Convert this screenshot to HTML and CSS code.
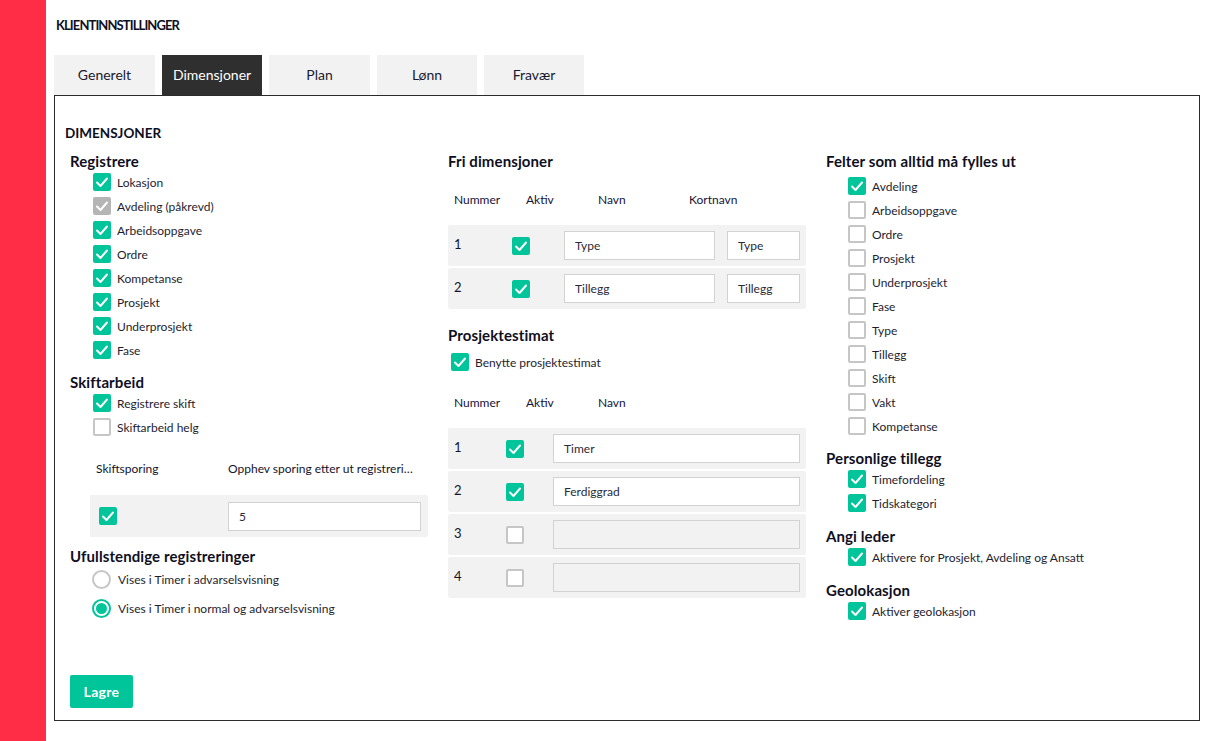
FILE: index.html
```html
<!DOCTYPE html>
<html lang="no">
<head>
<meta charset="utf-8">
<title>Klientinnstillinger</title>
<link rel="stylesheet" href="styles.css">
</head>
<body>
<div class="app">
  <aside class="sidebar"></aside>
  <main class="main">
    <h1 class="title">KLIENTINNSTILLINGER</h1>
    <nav class="tabs">
      <div class="tab w101">Generelt</div>
      <div class="tab active">Dimensjoner</div>
      <div class="tab w101">Plan</div>
      <div class="tab">Lønn</div>
      <div class="tab">Fravær</div>
    </nav>
    <section class="panel">
      <h2 class="panel-title">DIMENSJONER</h2>
      <div class="cols">
        <div class="col col-left">
          <h3 class="sec">Registrere</h3>
          <div class="list">
            <label class="item"><span class="cb on"><svg viewBox="0 0 18 18"><polyline points="4,9.5 7.5,13 14,5.5"/></svg></span>Lokasjon</label>
            <label class="item"><span class="cb dis"><svg viewBox="0 0 18 18"><polyline points="4,9.5 7.5,13 14,5.5"/></svg></span>Avdeling (påkrevd)</label>
            <label class="item"><span class="cb on"><svg viewBox="0 0 18 18"><polyline points="4,9.5 7.5,13 14,5.5"/></svg></span>Arbeidsoppgave</label>
            <label class="item"><span class="cb on"><svg viewBox="0 0 18 18"><polyline points="4,9.5 7.5,13 14,5.5"/></svg></span>Ordre</label>
            <label class="item"><span class="cb on"><svg viewBox="0 0 18 18"><polyline points="4,9.5 7.5,13 14,5.5"/></svg></span>Kompetanse</label>
            <label class="item"><span class="cb on"><svg viewBox="0 0 18 18"><polyline points="4,9.5 7.5,13 14,5.5"/></svg></span>Prosjekt</label>
            <label class="item"><span class="cb on"><svg viewBox="0 0 18 18"><polyline points="4,9.5 7.5,13 14,5.5"/></svg></span>Underprosjekt</label>
            <label class="item"><span class="cb on"><svg viewBox="0 0 18 18"><polyline points="4,9.5 7.5,13 14,5.5"/></svg></span>Fase</label>
          </div>
          <h3 class="sec sec-gap">Skiftarbeid</h3>
          <div class="list">
            <label class="item"><span class="cb on"><svg viewBox="0 0 18 18"><polyline points="4,9.5 7.5,13 14,5.5"/></svg></span>Registrere skift</label>
            <label class="item"><span class="cb"></span>Skiftarbeid helg</label>
          </div>
          <div class="skift-head">
            <span class="sh-a">Skiftsporing</span>
            <span class="sh-b">Opphev sporing etter ut registreri…</span>
          </div>
          <div class="skift-row">
            <span class="cb on"><svg viewBox="0 0 18 18"><polyline points="4,9.5 7.5,13 14,5.5"/></svg></span>
            <div class="input skift-input">5</div>
          </div>
          <h3 class="sec sec-gap2">Ufullstendige registreringer</h3>
          <div class="radios">
            <label class="radio-item"><span class="radio"></span>Vises i Timer i advarselsvisning</label>
            <label class="radio-item"><span class="radio sel"></span>Vises i Timer i normal og advarselsvisning</label>
          </div>
        </div>

        <div class="col col-mid">
          <h3 class="sec">Fri dimensjoner</h3>
          <div class="thead">
            <span class="th th-num">Nummer</span>
            <span class="th th-akt">Aktiv</span>
            <span class="th th-navn">Navn</span>
            <span class="th">Kortnavn</span>
          </div>
          <div class="rows">
            <div class="trow fri">
              <span class="num">1</span>
              <span class="cb on"><svg viewBox="0 0 18 18"><polyline points="4,9.5 7.5,13 14,5.5"/></svg></span>
              <div class="input">Type</div>
              <div class="input">Type</div>
            </div>
            <div class="trow fri">
              <span class="num">2</span>
              <span class="cb on"><svg viewBox="0 0 18 18"><polyline points="4,9.5 7.5,13 14,5.5"/></svg></span>
              <div class="input">Tillegg</div>
              <div class="input">Tillegg</div>
            </div>
          </div>
          <h3 class="sec sec-est">Prosjektestimat</h3>
          <label class="item item-est"><span class="cb on"><svg viewBox="0 0 18 18"><polyline points="4,9.5 7.5,13 14,5.5"/></svg></span>Benytte prosjektestimat</label>
          <div class="thead thead-est">
            <span class="th th-num">Nummer</span>
            <span class="th th-akt">Aktiv</span>
            <span class="th">Navn</span>
          </div>
          <div class="rows">
            <div class="trow est">
              <span class="num">1</span>
              <span class="cb on"><svg viewBox="0 0 18 18"><polyline points="4,9.5 7.5,13 14,5.5"/></svg></span>
              <div class="input">Timer</div>
            </div>
            <div class="trow est">
              <span class="num">2</span>
              <span class="cb on"><svg viewBox="0 0 18 18"><polyline points="4,9.5 7.5,13 14,5.5"/></svg></span>
              <div class="input">Ferdiggrad</div>
            </div>
            <div class="trow est">
              <span class="num">3</span>
              <span class="cb"></span>
              <div class="input empty"></div>
            </div>
            <div class="trow est">
              <span class="num">4</span>
              <span class="cb"></span>
              <div class="input empty"></div>
            </div>
          </div>
        </div>

        <div class="col col-right">
          <h3 class="sec">Felter som alltid må fylles ut</h3>
          <div class="list list-felt">
            <label class="item"><span class="cb on"><svg viewBox="0 0 18 18"><polyline points="4,9.5 7.5,13 14,5.5"/></svg></span>Avdeling</label>
            <label class="item"><span class="cb"></span>Arbeidsoppgave</label>
            <label class="item"><span class="cb"></span>Ordre</label>
            <label class="item"><span class="cb"></span>Prosjekt</label>
            <label class="item"><span class="cb"></span>Underprosjekt</label>
            <label class="item"><span class="cb"></span>Fase</label>
            <label class="item"><span class="cb"></span>Type</label>
            <label class="item"><span class="cb"></span>Tillegg</label>
            <label class="item"><span class="cb"></span>Skift</label>
            <label class="item"><span class="cb"></span>Vakt</label>
            <label class="item"><span class="cb"></span>Kompetanse</label>
          </div>
          <h3 class="sec sec-r first">Personlige tillegg</h3>
          <div class="list">
            <label class="item"><span class="cb on"><svg viewBox="0 0 18 18"><polyline points="4,9.5 7.5,13 14,5.5"/></svg></span>Timefordeling</label>
            <label class="item"><span class="cb on"><svg viewBox="0 0 18 18"><polyline points="4,9.5 7.5,13 14,5.5"/></svg></span>Tidskategori</label>
          </div>
          <h3 class="sec sec-r">Angi leder</h3>
          <div class="list">
            <label class="item"><span class="cb on"><svg viewBox="0 0 18 18"><polyline points="4,9.5 7.5,13 14,5.5"/></svg></span>Aktivere for Prosjekt, Avdeling og Ansatt</label>
          </div>
          <h3 class="sec sec-r">Geolokasjon</h3>
          <div class="list">
            <label class="item"><span class="cb on"><svg viewBox="0 0 18 18"><polyline points="4,9.5 7.5,13 14,5.5"/></svg></span>Aktiver geolokasjon</label>
          </div>
        </div>
      </div>
      <button class="save">Lagre</button>
    </section>
  </main>
</div>
</body>
</html>
```

FILE: styles.css
```css
* { box-sizing: border-box; }
html, body { margin: 0; padding: 0; background: #fff; }
body {
  font-family: Lato, "Noto Sans", "Liberation Sans", sans-serif;
  color: #14142b;
  font-size: 12px;
}
.app { display: flex; min-height: 741px; }
.sidebar { width: 46px; flex: none; background: #ff2d46; }
.main { flex: 1; padding-left: 8px; }

.title {
  margin: 16px 0 0 2px;
  font-size: 13px;
  line-height: 18px;
  font-weight: 700;
  letter-spacing: -0.9px;
  color: #0f0f22;
}
.tabs { display: flex; gap: 7px; margin-top: 21px; }
.tab {
  width: 100px; height: 40px;
  background: #f2f2f2;
  display: flex; align-items: center; justify-content: center;
  font-size: 14px;
  color: #1a1a2e;
  padding-bottom: 1px;
}
.tab.w101 { width: 101px; }
.tab.active { background: #2f2f2f; color: #fff; }

.panel {
  width: 1146px;
  border: 1px solid #2b2b2b;
  padding: 28px 10px 12px;
}
.panel-title { margin: 0; font-size: 13.5px; line-height: 18px; font-weight: 700; color: #0f0f22; }
.cols {
  display: grid;
  grid-template-columns: 378px 378px 1fr;
  margin: 10px 0 0 5px;
}
.col { display: flex; flex-direction: column; }
.sec { margin: 0; font-size: 15px; line-height: 18px; font-weight: 700; color: #0f0f22; letter-spacing: 0.1px; }

.list { display: flex; flex-direction: column; }
.item {
  display: flex; align-items: center;
  height: 24px;
  padding-left: 23px;
  gap: 6px;
  font-size: 12px;
  color: #1e1e30;
}
.col-right .item { padding-left: 22px; }

.cb {
  width: 18px; height: 18px; flex: none;
  border: 2px solid #c6c6c6;
  border-radius: 2px;
  background: #fff;
  display: inline-flex; align-items: center; justify-content: center;
}
.cb.on { background: #00c49a; border-color: #00c49a; }
.cb.dis { background: #b5b5b5; border-color: #b5b5b5; }
.cb svg { width: 18px; height: 18px; flex: none; margin: -2px; }
.cb svg polyline { fill: none; stroke: #fff; stroke-width: 2; stroke-linecap: round; stroke-linejoin: round; }

.sec-gap { margin-top: 11px; }
.skift-head {
  display: flex; margin-top: 21px; padding-left: 26px;
  line-height: 18px; font-size: 12px;
}
.sh-a { width: 132px; flex: none; }
.sh-b { white-space: nowrap; }
.skift-row {
  margin: 17px 0 0 20px;
  width: 338px; height: 42px;
  background: #f2f2f2;
  border-radius: 2px;
  display: flex; align-items: center;
  padding: 0 7px 0 9px;
}
.skift-input { margin-left: 111px; flex: 1; }
.sec-gap2 { margin-top: 10px; }
.radios { display: flex; flex-direction: column; }
.radio-item {
  display: flex; align-items: center; gap: 7px;
  height: 29px; padding-left: 22px;
  font-size: 12px; color: #1e1e30;
}
.radio {
  width: 19px; height: 19px; border-radius: 50%;
  border: 2px solid #c6c6c6; background: #fff; flex: none;
  display: inline-flex; align-items: center; justify-content: center;
}
.radio.sel { border-color: #00c49a; }
.radio.sel::after {
  content: ""; width: 11px; height: 11px; border-radius: 50%; background: #00c49a;
}

.input {
  height: 29px;
  border: 1px solid #d2d2d2;
  background: #fff;
  display: flex; align-items: center;
  padding-left: 10px;
  font-size: 12px; color: #2a2a3a;
}
.input.empty { background: #f2f2f2; }

.thead {
  display: flex; margin-top: 21px; padding-left: 6px;
  line-height: 18px; font-size: 12px; color: #14143a;
}
.th-num { width: 72px; }
.th-akt { width: 72px; }
.th-navn { width: 91px; }
.rows { display: flex; flex-direction: column; gap: 2px; margin-top: 16px; width: 358px; }
.trow {
  height: 41px;
  background: #f2f2f2;
  border-radius: 2px;
  display: grid;
  align-items: center;
  padding: 0 6px;
}
.trow.fri { grid-template-columns: 58px 52px 151px 85px; }
.trow.fri .input:last-child { margin-left: 12px; }
.trow.est { grid-template-columns: 52px 47px 1fr; }
.num { font-size: 13px; margin-top: -4px; }
.sec-est { margin-top: 17px; }
.item-est { margin-top: 6px; padding-left: 3px; }
.thead-est { margin-top: 20px; }

.list-felt { margin-top: 4px; }
.sec-r { margin-top: 12px; }
.sec-r.first { margin-top: 11px; }

.save {
  display: block;
  margin: 52px 0 0 5px;
  width: 63px; height: 33px;
  background: #00c49a;
  border: none; border-radius: 2px;
  color: #fff;
  font-family: inherit;
  font-size: 14px; font-weight: 700;
  letter-spacing: 0.3px;
  padding: 0;
}
```
